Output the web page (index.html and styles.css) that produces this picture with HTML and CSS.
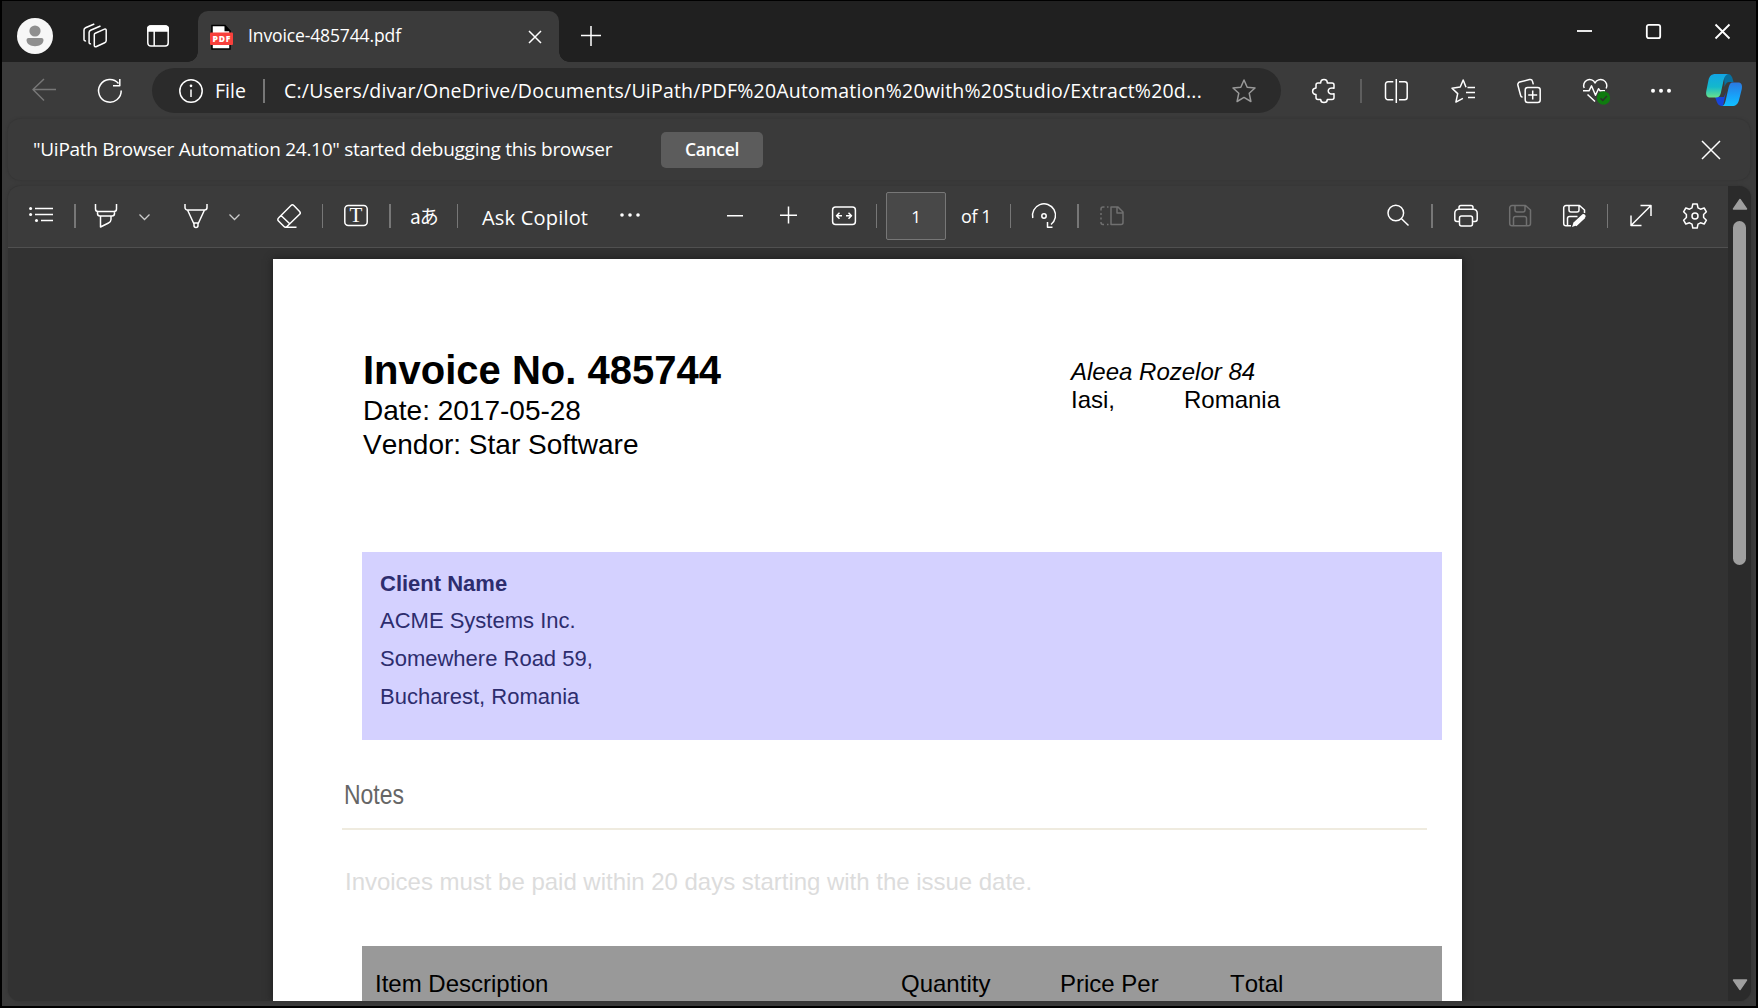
FILE: index.html
```html
<!DOCTYPE html>
<html lang="en">
<head>
<meta charset="utf-8">
<title>Invoice-485744.pdf</title>
<link rel="stylesheet" href="styles.css">
</head>
<body>
<div class="window">
  <header class="tabstrip">
    <svg class="avatar" viewBox="0 0 36 36"><circle cx="18" cy="18" r="18" fill="#f7f7f7"/><circle cx="18" cy="13" r="5.600" fill="#8f8f8f"/><path d="M11.500 20h13a2 2 0 0 1 2 2c0 3.800-3.700 6.200-8.500 6.200S9.500 25.800 9.500 22a2 2 0 0 1 2-2z" fill="#8f8f8f"/></svg>
    <svg class="icon workspaces" viewBox="0 0 24 24"><path d="M12.300 9.200 21.500 5.100a1.200 1.200 0 0 1 1.700 1.100V16.500a2.500 2.500 0 0 1-1.500 2.300L13 22.700a1.200 1.200 0 0 1-1.700-1.100V10.700a1.700 1.700 0 0 1 1-1.500M8 19.700a1.300 1.300 0 0 1-1.900-1.200V8.600A2.500 2.500 0 0 1 7.600 6.300L17.500 2M3 16.700A1.300 1.300 0 0 1 1 15.500V6a2.500 2.500 0 0 1 1.500-2.300L11.300 0"/></svg>
    <svg class="icon tab-actions" viewBox="0 0 24 24"><rect x="1.800" y="2" width="20.400" height="20" rx="3"/><path d="M1.800 5a3 3 0 0 1 3-3h14.400a3 3 0 0 1 3 3v2H1.800z" fill="#fff"/><path d="M8.200 7v15"/></svg>
    <div class="tab">
      <svg class="pdf-icon" viewBox="0 0 23 24"><path d="M2 .5h13l5 5.500v18H2z" fill="#fff" stroke="#000" stroke-width="1.500"/><path d="M14.500 0v6.200h6.200z" fill="#000"/><rect y="7.500" width="23" height="12.500" rx="1" fill="#f8403c"/><text x="2.600" y="16.800" textLength="17.800">PDF</text></svg>
      <span class="tab-title ui">Invoice-485744.pdf</span>
      <svg class="icon tab-close" viewBox="0 0 14 14"><path d="M1 1l12 12M13 1L1 13"/></svg>
    </div>
    <svg class="icon new-tab" viewBox="0 0 20 20"><path d="M10 0v20M0 9.500h20"/></svg>
    <div class="controls">
      <svg viewBox="0 0 15 15"><path d="M0 7h15"/></svg>
      <svg viewBox="0 0 15 15"><rect x=".8" y=".8" width="13.400" height="13.400" rx="2"/></svg>
      <svg viewBox="0 0 15 15"><path d="M.5.5l14 14M14.500.5l-14 14"/></svg>
    </div>
  </header>

  <nav class="address-row">
    <svg class="icon back" viewBox="0 0 24 24"><path d="M24 10.500H1M12 0 1 10.500l11 11"/></svg>
    <svg class="icon reload" viewBox="0 0 24 24"><path d="M20.500 4.500A11.300 11.300 0 1 0 23.200 11.500M21.800 0v6.800H15"/></svg>
    <div class="address">
      <svg class="icon info" viewBox="0 0 24 24"><circle cx="12" cy="12" r="11.200"/><path d="M12 10.500v7.500"/><circle cx="12" cy="6.800" r=".6" fill="#fff"/></svg>
      <span class="scheme ui">File</span>
      <i class="rule"></i>
      <span class="url ui">C:/Users/divar/OneDrive/Documents/UiPath/PDF%20Automation%20with%20Studio/Extract%20d...</span>
      <svg class="icon star" viewBox="0 0 24 24"><path d="M12 1l3.200 7.200 7.800.8-5.800 5.200 1.700 8.300L12 18.400 5.100 22.500l1.700-8.300L1 9l7.800-.8z"/></svg>
    </div>
    <svg class="icon extensions" viewBox="0 0 24 24"><path d="M6 4H8.700C8.700 1.800 10 .6 12 .6S15.300 1.800 15.300 4H20a2 2 0 0 1 2 2v3.200c-3.200-.9-5.800.5-5.800 2.800s2.600 3.700 5.800 2.800V18.500a2 2 0 0 1-2 2h-4.700c0 2-1.300 3.100-3.300 3.100s-3.300-1.100-3.300-3.100H6a2 2 0 0 1-2-2V15.500C1.900 15.300.6 14.200.6 12.200S1.900 9.200 4 9V6a2 2 0 0 1 2-2z"/></svg>
    <i class="rule faint"></i>
    <svg class="icon split" viewBox="0 0 24 24"><path d="M11.300 0v24M8.300 2.700H3a2.500 2.500 0 0 0-2.500 2.500v13A2.500 2.500 0 0 0 3 20.700h5.300M14 2.700h5.700a2.500 2.500 0 0 1 2.500 2.500v13a2.500 2.500 0 0 1-2.500 2.500H14"/></svg>
    <svg class="icon gap42" viewBox="0 0 24 24"><path d="M15 8.300 12.200 1 9.200 8 1 9.200l5.700 5.400-1.800 8.500 7-3.800M16.500 8.500H24M15 13.500h9M17 18.500h7"/></svg>
    <svg class="icon gap42" viewBox="0 0 24 24"><rect x="8.200" y="8.500" width="15" height="15" rx="2.500"/><path d="M15.700 11.500v9M11.200 16h9M5.500 18.300A2.500 2.500 0 0 1 3.500 16L.9 6.200A2.500 2.500 0 0 1 2.700 3.100L12.500.6a2.500 2.500 0 0 1 3 1.800l.8 3"/></svg>
    <svg class="icon essentials" viewBox="0 0 28 24"><path d="M1.200 9A5.800 5.800 0 0 1 12 4 5.800 5.800 0 0 1 23.200 9.500M0 11.800h6l2.500-5 4 9.500 3-6.500 1.500 2h5M4.500 15.500 12 22.500"/><circle cx="20.500" cy="19" r="6.700" fill="#0f7b0f" stroke="none"/><path d="M17.500 19.200l2.200 2.200 4.200-4.300" stroke="#2a352a"/></svg>
    <svg class="dots browser-menu" viewBox="0 0 24 24"><circle cx="4" cy="11.700" r="2"/><circle cx="12" cy="11.700" r="2"/><circle cx="20" cy="11.700" r="2"/></svg>
    <svg class="copilot" viewBox="0 0 36 32">
      <defs>
        <linearGradient id="teal" x1="0" y1="0" x2="0" y2="1"><stop stop-color="#12a5e6"/><stop offset=".55" stop-color="#13b8cc"/><stop offset="1" stop-color="#69e28a"/></linearGradient>
        <linearGradient id="blue" x1="0" y1="0" x2="0" y2="1"><stop stop-color="#2b78e0"/><stop offset=".6" stop-color="#17a4fb"/><stop offset="1" stop-color="#12c0ff"/></linearGradient>
      </defs>
      <path d="M18 0h4c3 0 4.500 3 5.500 8h-4c-3 0-4 2-5 5z" fill="#08709f"/>
      <path d="M9 23h9l2-5-3 14c-4 0-5.500-2-6.500-5z" fill="#1745db"/>
      <path d="M9.500 0H22c-3 1-4 4-5 9l-2.200 10c-.8 3-2 4.500-5 4.500H4C.8 23.500-.4 21 .3 17L2.500 6C3.500 2 5.500 0 9.500 0z" fill="url(#teal)"/>
      <path d="M26.500 8.500H32c3.500 0 4.500 2.500 3.800 6.500L33 26c-1.200 4-3 6-7 6h-9.500c2-1 2.500-3 3.300-6l2.700-12c.8-3 1.500-5.500 4-5.500z" fill="url(#blue)"/>
    </svg>
  </nav>

  <section class="notice">
    <span class="notice-text ui">"UiPath Browser Automation 24.10" started debugging this browser</span>
    <span class="cancel"><span class="cancel-label ui">Cancel</span></span>
    <svg class="icon notice-close" viewBox="0 0 18 18"><path d="M0 0l18 18M18 0L0 18"/></svg>
  </section>

  <main class="viewer">
    <div class="pane">
      <div class="toolbar">
        <svg class="icon gap21" viewBox="0 0 24 24"><path d="M6 4.500h18M6 10.500h18M12 16.500h12"/><g fill="#fff" stroke="none"><circle cx="1.600" cy="4.500" r="1.500"/><circle cx="1.600" cy="10.500" r="1.500"/><circle cx="7.500" cy="16.500" r="1.500"/></g></svg>
        <i class="rule gap21"></i>
        <svg class="icon highlighter" viewBox="0 0 24 24"><path d="M1.500 0v5A2.500 2.500 0 0 0 4 7.500h16A2.500 2.500 0 0 0 22.500 5V0M3.500 7.500v2a2.500 2.500 0 0 0 2.500 2.500h12a2.500 2.500 0 0 0 2.500-2.500v-2M6.500 12v11l8-4a4 4 0 0 0 2.500-3.500V12"/></svg>
        <svg class="chevron gap21" viewBox="0 0 11 7"><path d="M.5 1.500l5 5 5-5"/></svg>
        <svg class="icon pen" viewBox="0 0 24 24"><path d="M1 0v3.500A2.500 2.500 0 0 0 3.500 6h17A2.500 2.500 0 0 0 23 3.500V0M3.500 6l6.500 14v1.500a2 2 0 0 0 4 0V20l6.500-14M9.500 19h5"/></svg>
        <svg class="chevron gap21" viewBox="0 0 11 7"><path d="M.5 1.500l5 5 5-5"/></svg>
        <svg class="icon eraser" viewBox="0 0 24 24"><path d="M14 1.500a2 2 0 0 1 2.800 0l5.800 6a2 2 0 0 1 0 2.800L10 22.500a2 2 0 0 1-3 0l-5.500-5.500a2 2 0 0 1 0-3zM4 11.500l9 8.500M8.500 23.200h11"/></svg>
        <i class="rule thin gap21"></i>
        <svg class="icon gap21" viewBox="0 0 24 24"><rect x=".8" y="1.500" width="22.400" height="20" rx="3.500"/><text class="t-glyph" x="12" y="18" text-anchor="middle">T</text></svg>
        <i class="rule gap21"></i>
        <span class="translate">aあ</span>
        <i class="rule thin gap20"></i>
        <span class="ask ui">Ask Copilot</span>
        <svg class="dots more" viewBox="0 0 24 24"><circle cx="4" cy="11" r="1.800"/><circle cx="12" cy="11" r="1.800"/><circle cx="20" cy="11" r="1.800"/></svg>
        <svg class="icon minus" viewBox="0 0 16 24"><path d="M0 11.700h16"/></svg>
        <svg class="icon plus" viewBox="0 0 18 24"><path d="M9.500 2.500v17M1 11.200h17"/></svg>
        <svg class="icon fit" viewBox="0 0 24 24"><rect x=".6" y="3" width="22.800" height="17.500" rx="3"/><path d="M4.500 11.700H10M14 11.700h5.500M7.500 8.700l-3 3 3 3M16.500 8.700l3 3-3 3"/></svg>
        <i class="rule thin gap20"></i>
        <span class="page-no"><span class="page-no-value ui">1</span></span>
        <span class="page-total ui">of 1</span>
        <i class="rule thin gap20"></i>
        <svg class="icon gap21" viewBox="0 0 24 24"><path d="M.8 14A11.500 11.500 0 1 1 19 20.500M20.500 23.200h-5V18"/><circle cx="12" cy="12" r="2.200"/></svg>
        <i class="rule gap21"></i>
        <svg class="icon dim gap21" viewBox="0 0 24 24"><path d="M11 3h7l5 5v10.500a2 2 0 0 1-2 2H11zM17 3v6h6M8.500 3H7M4.500 3H3a2 2 0 0 0-2 2v1.500M1 9v2M1 13.500v2M1 18v.5a2 2 0 0 0 2 2h1M7 20.500h1.500"/></svg>
        <svg class="icon search" viewBox="0 0 24 24"><circle cx="9.800" cy="9" r="7.800"/><path d="M15.500 14.800 22.500 21.500"/></svg>
        <i class="rule gap21"></i>
        <svg class="icon gap21" viewBox="0 0 24 24"><path d="M5 5V3.500A2 2 0 0 1 7 1.500h10a2 2 0 0 1 2 2V5M5.500 17.500H3a2.200 2.200 0 0 1-2.200-2.200V9A3.800 3.800 0 0 1 4.600 5.200h14.800A3.800 3.800 0 0 1 23.200 9v6.300a2.200 2.200 0 0 1-2.200 2.200h-2.500"/><rect x="5.500" y="12" width="13" height="10" rx="2"/></svg>
        <svg class="icon dim gap30" viewBox="0 0 24 24"><path d="M4 1.500h13.500L22.500 6v13.500a2.300 2.300 0 0 1-2.300 2.300H4a2.300 2.300 0 0 1-2.300-2.300V3.800A2.300 2.300 0 0 1 4 1.500zM7 1.500V6a2 2 0 0 0 2 2h6a2 2 0 0 0 2-2V1.500M5.500 21.500v-7A2 2 0 0 1 7.500 12.500h9a2 2 0 0 1 2 2v7"/></svg>
        <svg class="icon gap30" viewBox="0 0 24 24"><path d="M9 21.800H4a2.300 2.300 0 0 1-2.300-2.300V3.800A2.300 2.300 0 0 1 4 1.500h13.500L22.500 6v3M7 1.500V6a2 2 0 0 0 2 2h6a2 2 0 0 0 2-2V1.500M5.500 21.500v-7A2 2 0 0 1 7.500 12.500h8"/><path d="M20.500 10.200c1.500-1 3.800 1 3 2.800l-8.500 8.300-5 1.700 1.500-4.500z" fill="#fff" stroke="none"/><path d="M21.800 12.500 13 20.800" stroke-width="4"/></svg>
        <i class="rule thin gap21"></i>
        <svg class="icon gap21" viewBox="0 0 24 24"><path d="M2 21.500 22 1.500M11.500 1.500H22V12M2 11.500v10h10.500"/></svg>
        <svg class="icon gear gap30" viewBox="0 0 24 26"><path d="M9.800 1h4.400l.8 3.800 2.500 1.400 3.700-1.200 2.200 3.800L20.600 11.500v3l2.800 2.700-2.200 3.800-3.700-1.200-2.500 1.400-.8 3.800H9.800L9 21.200 6.500 19.800 2.800 21 .6 17.200l2.800-2.700v-3L.6 8.800 2.800 5l3.700 1.200L9 4.800z"/><circle cx="12" cy="13" r="3"/></svg>
      </div>
      <div class="canvas">
        <article class="sheet">
          <div class="masthead">
            <div class="heading">
              <h1>Invoice No. 485744</h1>
              <p>Date: 2017-05-28</p>
              <p>Vendor: Star Software</p>
            </div>
            <div class="origin">
              <p class="street">Aleea Rozelor 84</p>
              <p class="place"><span class="city">Iasi,</span><span>Romania</span></p>
            </div>
          </div>
          <div class="client">
            <p class="client-title">Client Name</p>
            <p>ACME Systems Inc.</p>
            <p>Somewhere Road 59,</p>
            <p>Bucharest, Romania</p>
          </div>
          <h2><span class="condensed">Notes</span></h2>
          <p class="terms">Invoices must be paid within 20 days starting with the issue date.</p>
          <div class="items-head">
            <span>Item Description</span><span>Quantity</span><span>Price Per</span><span>Total</span>
          </div>
        </article>
      </div>
    </div>
    <div class="scrollbar">
      <svg viewBox="0 0 16 12"><path d="M8 1.500 14.500 11h-13z"/></svg>
      <div class="thumb"></div>
      <svg viewBox="0 0 16 12"><path d="M8 10.500 1.500 1h13z"/></svg>
    </div>
  </main>
</div>
</body>
</html>
```
FILE: styles.css
```css
* { box-sizing: border-box; }
body { margin: 0; width: 1758px; height: 1008px; padding: 1px 2px 2px; background: #000; overflow: hidden; font-family: "Open Sans", "Noto Sans", sans-serif; color: #fff; }
h1, h2, p { margin: 0; font-weight: 400; }
svg { display: block; flex: none; overflow: visible; }
.ui { display: block; flex: none; white-space: nowrap; }
.window { width: 1754px; height: 1005px; background: #3b3b3b; }

.icon { width: 24px; height: 24px; fill: none; stroke: #fff; stroke-width: 1.5; stroke-linecap: butt; stroke-linejoin: round; }
.icon.dim { stroke: #707070; }
.dots { width: 24px; height: 24px; fill: #fff; }
.rule { flex: none; width: 2px; height: 24px; background: #777; }
.rule.thin { width: 1px; }
.rule.faint { background: #5e5e5e; margin-left: 23px; }
.gap20 { margin-left: 20px; }
.gap21 { margin-left: 21px; }
.gap30 { margin-left: 30px; }
.gap42 { margin-left: 42px; }

.tabstrip { display: flex; align-items: center; height: 61px; padding: 9px 26px 0 15px; background: #202020; }
.avatar { width: 36px; height: 36px; }
.workspaces { margin-left: 30px; }
.tab-actions { margin-left: 39px; }
.tab { position: relative; display: flex; align-items: center; align-self: flex-end; width: 361px; height: 51px; margin-left: 28px; padding-left: 12px; background: #3b3b3b; border-radius: 10px 10px 0 0; }
.tab::before, .tab::after { content: ""; position: absolute; bottom: 0; width: 10px; height: 10px; }
.tab::before { left: -10px; background: radial-gradient(circle at 0 0, #202020 9.5px, #3b3b3b 10px); }
.tab::after { right: -10px; background: radial-gradient(circle at 100% 0, #202020 9.5px, #3b3b3b 10px); }
.pdf-icon { width: 23px; height: 24px; }
.pdf-icon text { font: 800 8.5px "Open Sans", sans-serif; fill: #fff; }
.tab-title { width: 153px; margin-left: 15px; padding-bottom: 3px; font-size: 17.5px; letter-spacing: -0.12px; }
.tab-close { width: 14px; height: 14px; margin-left: 127px; }
.new-tab { width: 20px; height: 20px; margin-left: 22px; }
.controls { display: flex; gap: 54px; align-self: flex-start; margin: 14px 0 0 auto; }
.controls svg { width: 15px; height: 15px; fill: none; stroke: #fff; stroke-width: 1.8; }

.address-row { display: flex; align-items: center; height: 57px; }
.back { margin-left: 30px; stroke: #777; }
.reload { margin-left: 42px; }
.address { display: flex; align-items: center; width: 1129px; height: 45px; margin-left: 30px; background: #2b2b2b; border-radius: 23px; font-size: 19.5px; }
.info { margin-left: 27px; }
.scheme { width: 31px; margin-left: 12px; }
.address .rule { margin-left: 17px; }
.url { width: 918px; margin-left: 19px; letter-spacing: 0.205px; }
.star { margin-left: 30px; stroke: #999; }
.extensions { margin-left: 31px; }
.rule.faint { margin-left: 24px; }
.split { margin-left: 23px; }
.essentials { width: 28px; margin-left: 42px; }
.browser-menu { margin-left: 38px; }
.copilot { width: 36px; height: 32px; margin: 0 0 1px 33px; }

.notice { display: flex; align-items: center; width: 1742px; height: 61px; margin-left: 6px; padding: 0 30px 0 25px; border-radius: 12px; background: #3a3a3a; box-shadow: 0 0 3px #303030; }
.notice-text { width: 579px; padding-bottom: 2px; font-size: 19px; letter-spacing: -0.28px; }
.cancel { display: flex; align-items: center; justify-content: center; width: 102px; height: 36px; margin-left: 49px; background: #5c5c5c; border-radius: 5px; }
.cancel-label { padding-bottom: 1px; font-size: 17.5px; font-weight: 600; letter-spacing: -0.3px; }
.notice-close { width: 18px; height: 18px; margin-left: auto; }

.viewer { display: flex; width: 1743px; height: 815px; margin: 6px 0 0 6px; border-radius: 12px; overflow: hidden; background: #323232; box-shadow: 0 0 3px #303030; }
.pane { width: 1720px; }
.toolbar { display: flex; align-items: center; height: 62px; padding-bottom: 1px; background: #3b3b3b; border-bottom: 1px solid #505050; }
.highlighter { margin-left: 18px; }
.chevron { width: 11px; height: 7px; fill: none; stroke: #ccc; stroke-width: 1.3; }
.pen { margin-left: 34px; }
.eraser { margin-left: 37px; }
.t-glyph { font: 21px "Liberation Serif", serif; fill: #fff; stroke: none; }
.translate { flex: none; width: 27px; margin-left: 19px; padding-bottom: 1px; white-space: nowrap; font: 19px "Noto Sans CJK JP", sans-serif; letter-spacing: -1px; }
.ask { width: 106px; margin-left: 24px; padding-top: 2px; font-size: 20px; letter-spacing: 0.2px; }
.more { margin-left: 30px; }
.minus { width: 16px; margin-left: 85px; }
.plus { width: 18px; margin-left: 36px; }
.fit { margin-left: 35px; }
.page-no { display: flex; align-items: center; justify-content: center; width: 60px; height: 48px; margin-left: 9px; background: #484848; border: 1px solid #777; border-radius: 2px; font-size: 17px; }
.page-total { width: 29px; margin-left: 15px; font-size: 18px; letter-spacing: -0.4px; }
.search { margin-left: 262px; }
.gear { height: 26px; }

.canvas { height: 753px; padding: 11px 0 0 265px; overflow: hidden; }
.sheet { width: 1189px; height: 742px; overflow: hidden; background: #fff; color: #000; font-family: "Liberation Sans", Arial, sans-serif; font-kerning: none; box-shadow: 0 0 8px #1c1c1c; }
.masthead { display: flex; justify-content: space-between; height: 293px; padding: 88px 162px 0 90px; }
.heading { font-size: 28px; line-height: 34px; white-space: nowrap; }
.heading h1 { font-size: 40px; font-weight: 700; line-height: 46px; padding-bottom: 1px; }
.origin { width: 229px; margin: 0 0 0 auto; padding-top: 11px; font-size: 24px; line-height: 28px; }
.street { font-style: italic; }
.place { display: flex; }
.city { width: 113px; }
.client { width: 1080px; height: 188px; margin-left: 89px; padding: 13px 18px 0; background: #d4d1ff; color: #2d2d6e; font-size: 22px; line-height: 38px; }
.client-title { height: 37px; font-weight: 700; }
h2 { width: 1085px; height: 90px; margin-left: 69px; padding: 38px 2px 0; border-bottom: 2px solid #efebdf; color: #666; font-size: 28px; line-height: 34px; }
.condensed { display: inline-block; transform: scaleX(0.82); transform-origin: 0 50%; }
.terms { height: 116px; padding: 38px 0 0 72px; color: #dcdcdc; font-size: 24px; line-height: 28px; letter-spacing: -0.02px; white-space: nowrap; }
.items-head { display: grid; grid-template-columns: 526px 159px 170px 1fr; width: 1080px; height: 55px; margin-left: 89px; padding: 24px 0 0 13px; background: #999; font-size: 24px; line-height: 28px; }

.scrollbar { display: flex; flex-direction: column; align-items: center; width: 23px; padding: 12px 0 10px; background: #2b2b2b; }
.scrollbar svg { width: 16px; height: 12px; fill: #9f9f9f; stroke: #9f9f9f; stroke-width: 1.5; stroke-linejoin: round; }
.thumb { width: 13px; height: 344px; margin: 11px 0 auto; border-radius: 7px; background: #9f9f9f; }
```
